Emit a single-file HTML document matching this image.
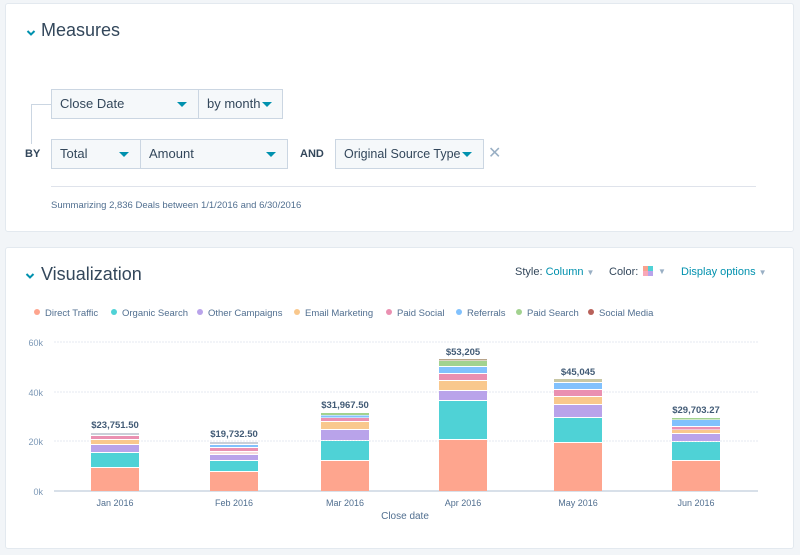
<!DOCTYPE html>
<html><head><meta charset="utf-8"><style>
*{box-sizing:border-box;margin:0;padding:0}
body{width:800px;height:555px;background:#f2f5f8;font-family:"Liberation Sans",sans-serif;color:#33475b;position:relative;overflow:hidden}
.card{position:absolute;background:#fff;border:1px solid #e3e9ef;border-radius:3px}
.abs{position:absolute}
.sel{position:absolute;background:#f5f8fa;border:1px solid #cbd6e2;height:30px;font-size:13px;line-height:28px;padding-left:8px;color:#33475b;white-space:nowrap}
.car{position:absolute;top:12px;width:0;height:0;border-left:5px solid transparent;border-right:5px solid transparent;border-top:5px solid #0091ae}
.lg{position:absolute;top:308px;font-size:9.5px;color:#516f90}
.lg i{display:inline-block;width:6px;height:6px;border-radius:3px;margin-right:5px;vertical-align:1px}
</style></head><body>
<div class="card" style="left:5px;top:3px;width:789px;height:229px"></div>
<div class="card" style="left:5px;top:247px;width:789px;height:302px"></div>

<svg class="abs" style="left:25px;top:28px" width="12" height="10"><path d="M2.5 3 L6 6.5 L9.5 3" stroke="#0091ae" stroke-width="2" fill="none"/></svg>
<div class="abs" style="left:41px;top:20px;font-size:18px;color:#33475b">Measures</div>

<div class="abs" style="left:31px;top:104px;width:21px;height:40px;border-left:1px solid #cbd6e2;border-top:1px solid #cbd6e2"></div>
<div class="sel" style="left:51px;top:89px;width:148px">Close Date<span class="car" style="left:125px"></span></div>
<div class="sel" style="left:198px;top:89px;width:85px">by month<span class="car" style="left:63px"></span></div>
<div class="abs" style="left:25px;top:148px;font-size:11px;font-weight:bold">BY</div>
<div class="sel" style="left:51px;top:139px;width:90px">Total<span class="car" style="left:67px"></span></div>
<div class="sel" style="left:140px;top:139px;width:148px">Amount<span class="car" style="left:125px"></span></div>
<div class="abs" style="left:300px;top:148px;font-size:11px;font-weight:bold">AND</div>
<div class="sel" style="left:335px;top:139px;width:149px;font-size:12.5px">Original Source Type<span class="car" style="left:126px"></span></div>
<div class="abs" style="left:488px;top:143px;font-size:16px;color:#99afc4">✕</div>
<div class="abs" style="left:51px;top:186px;width:705px;height:1px;background:#dfe3eb"></div>
<div class="abs" style="left:51px;top:200px;font-size:9.5px;color:#516f90">Summarizing 2,836 Deals between 1/1/2016 and 6/30/2016</div>

<svg class="abs" style="left:24px;top:271px" width="12" height="10"><path d="M2.5 3 L6 6.5 L9.5 3" stroke="#0091ae" stroke-width="2" fill="none"/></svg>
<div class="abs" style="left:41px;top:264px;font-size:18px">Visualization</div>
<div class="abs" style="left:515px;top:266px;font-size:11px">Style: <span style="color:#0091ae">Column</span> <span style="color:#99afc4;font-size:8px">▼</span></div>
<div class="abs" style="left:609px;top:266px;font-size:11px">Color:</div>
<div class="abs" style="left:643px;top:266px;width:5px;height:5px;background:#f8a28f"></div>
<div class="abs" style="left:648px;top:266px;width:5px;height:5px;background:#4fd2d6"></div>
<div class="abs" style="left:643px;top:271px;width:5px;height:5px;background:#f9a8b8"></div>
<div class="abs" style="left:648px;top:271px;width:5px;height:5px;background:#b9a3ea"></div>
<div class="abs" style="left:658px;top:267px;color:#99afc4;font-size:8px">▼</div>
<div class="abs" style="left:681px;top:266px;font-size:11px;color:#0091ae">Display options <span style="color:#99afc4;font-size:8px">▼</span></div>

<div class="lg" style="left:34px"><i style="background:#fea58e"></i>Direct Traffic</div>
<div class="lg" style="left:111px"><i style="background:#4fd2d6"></i>Organic Search</div>
<div class="lg" style="left:197px"><i style="background:#b9a3ea"></i>Other Campaigns</div>
<div class="lg" style="left:294px"><i style="background:#f9c88d"></i>Email Marketing</div>
<div class="lg" style="left:386px"><i style="background:#ea90b1"></i>Paid Social</div>
<div class="lg" style="left:456px"><i style="background:#81c1fd"></i>Referrals</div>
<div class="lg" style="left:516px"><i style="background:#a2d28f"></i>Paid Search</div>
<div class="lg" style="left:588px"><i style="background:#b8615a"></i>Social Media</div>

<svg class="abs" style="left:0;top:0" width="800" height="555" font-family="Liberation Sans, sans-serif">
<g stroke="#e5eaf0" stroke-dasharray="2,1">
<line x1="54" y1="342" x2="758" y2="342"/><line x1="54" y1="392" x2="758" y2="392"/><line x1="54" y1="441" x2="758" y2="441"/>
</g>
<line x1="54" y1="491" x2="758" y2="491" stroke="#cbd6e2" stroke-width="1.5"/>
<g font-size="9" fill="#7c98b6" text-anchor="end">
<text x="43" y="346">60k</text><text x="43" y="396">40k</text><text x="43" y="445">20k</text><text x="43" y="495">0k</text>
</g>
<g font-size="9" fill="#516f90" text-anchor="middle">
<text x="115" y="506">Jan 2016</text><text x="234" y="506">Feb 2016</text><text x="345" y="506">Mar 2016</text>
<text x="463" y="506">Apr 2016</text><text x="578" y="506">May 2016</text><text x="696" y="506">Jun 2016</text>
<text x="405" y="519" font-size="10">Close date</text>
</g>
<g font-size="9.5" fill="#425b76" font-weight="bold" text-anchor="middle">
<text x="115" y="428">$23,751.50</text><text x="234" y="437">$19,732.50</text><text x="345" y="408">$31,967.50</text>
<text x="463" y="355">$53,205</text><text x="578" y="375">$45,045</text><text x="696" y="413">$29,703.27</text>
</g>
<g id="bars">
<rect x="91" y="468" width="48" height="23" fill="#fea58e"/><rect x="91" y="453" width="48" height="14" fill="#4fd2d6"/>
<rect x="91" y="445" width="48" height="7" fill="#b9a3ea"/><rect x="91" y="440" width="48" height="4" fill="#f9c88d"/>
<rect x="91" y="436" width="48" height="3" fill="#ea90b1"/><rect x="91" y="433" width="48" height="2" fill="#c9cfd8"/>
<rect x="210" y="472" width="48" height="19" fill="#fea58e"/><rect x="210" y="461" width="48" height="10" fill="#4fd2d6"/>
<rect x="210" y="455" width="48" height="5" fill="#b9a3ea"/><rect x="210" y="452" width="48" height="2" fill="#f7dcdc"/>
<rect x="210" y="448" width="48" height="3" fill="#ea90b1"/><rect x="210" y="445" width="48" height="2" fill="#81c1fd"/>
<rect x="210" y="442" width="48" height="2" fill="#c9cfd8"/>
<rect x="321" y="461" width="48" height="30" fill="#fea58e"/><rect x="321" y="441" width="48" height="19" fill="#4fd2d6"/>
<rect x="321" y="430" width="48" height="10" fill="#b9a3ea"/><rect x="321" y="422" width="48" height="7" fill="#f9c88d"/>
<rect x="321" y="418" width="48" height="3" fill="#ea90b1"/><rect x="321" y="415.5" width="48" height="2" fill="#81c1fd"/>
<rect x="321" y="413" width="48" height="2" fill="#a2d28f"/>
<rect x="439" y="440" width="48" height="51" fill="#fea58e"/><rect x="439" y="401" width="48" height="38" fill="#4fd2d6"/>
<rect x="439" y="391" width="48" height="9" fill="#b9a3ea"/><rect x="439" y="381" width="48" height="9" fill="#f9c88d"/>
<rect x="439" y="374" width="48" height="6" fill="#ea90b1"/><rect x="439" y="367" width="48" height="6" fill="#81c1fd"/>
<rect x="439" y="361" width="48" height="5" fill="#a2d28f"/><rect x="439" y="359" width="48" height="1.5" fill="#b8a48a"/>
<rect x="554" y="443" width="48" height="48" fill="#fea58e"/><rect x="554" y="418" width="48" height="24" fill="#4fd2d6"/>
<rect x="554" y="405" width="48" height="12" fill="#b9a3ea"/><rect x="554" y="397" width="48" height="7" fill="#f9c88d"/>
<rect x="554" y="390" width="48" height="6" fill="#ea90b1"/><rect x="554" y="383" width="48" height="6" fill="#81c1fd"/>
<rect x="554" y="379" width="48" height="3" fill="#c8c7a5"/>
<rect x="672" y="461" width="48" height="30" fill="#fea58e"/><rect x="672" y="442" width="48" height="18" fill="#4fd2d6"/>
<rect x="672" y="434" width="48" height="7" fill="#b9a3ea"/><rect x="672" y="430" width="48" height="3" fill="#f9c88d"/>
<rect x="672" y="427" width="48" height="2.5" fill="#ea90b1"/><rect x="672" y="420" width="48" height="6" fill="#81c1fd"/>
<rect x="672" y="418" width="48" height="1.5" fill="#a2d28f"/>
</g>
</svg>
</body></html>
